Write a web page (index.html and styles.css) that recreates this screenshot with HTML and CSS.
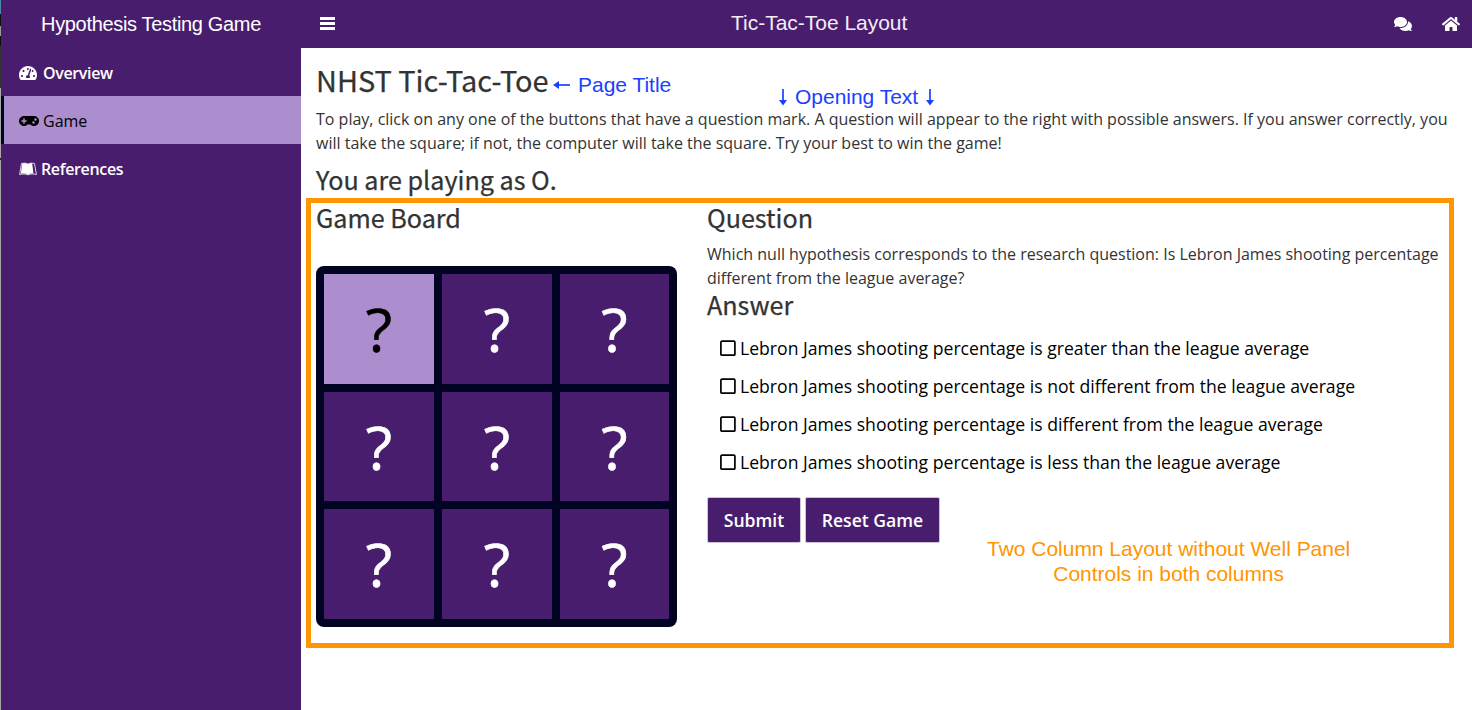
FILE: index.html
```html
<!DOCTYPE html>
<html lang="en">
<head>
<meta charset="utf-8">
<title>Hypothesis Testing Game</title>
<link rel="stylesheet" href="styles.css">
</head>
<body>
<div class="app">
  <div class="edge"></div>
  <aside class="sidebar">
    <div class="brand">Hypothesis Testing Game</div>
    <nav class="menu">
      <a class="item"><svg class="ico" width="18" height="16" viewBox="0 0 576 512"><path d="M288 32C128.94 32 0 160.94 0 320c0 52.8 14.25 102.26 39.06 144.8 5.61 9.62 16.3 15.2 27.44 15.2h443c11.14 0 21.83-5.58 27.44-15.2C561.75 422.26 576 372.8 576 320c0-159.06-128.94-288-288-288zm0 64c14.71 0 26.58 10.13 30.32 23.65-1.11 2.26-2.64 4.23-3.45 6.67l-9.22 27.67c-5.13 3.49-10.97 6.01-17.64 6.01-17.67 0-32-14.33-32-32S270.33 96 288 96zM96 384c-17.67 0-32-14.33-32-32s14.33-32 32-32 32 14.33 32 32-14.33 32-32 32zm48-160c-17.67 0-32-14.33-32-32s14.33-32 32-32 32 14.33 32 32-14.33 32-32 32zm246.77-72.41l-61.33 184C343.13 347.33 352 364.54 352 384c0 11.72-3.38 22.55-8.88 32H232.88c-5.5-9.45-8.88-20.28-8.88-32 0-33.94 26.5-61.43 59.9-63.59l61.34-184.01c4.17-12.56 17.73-19.45 30.36-15.17 12.57 4.19 19.35 17.79 15.17 30.36zm14.66 57.2l15.52-46.55c3.47-1.29 7.13-2.23 11.05-2.23 17.67 0 32 14.33 32 32s-14.33 32-32 32c-11.38-.01-20.89-6.28-26.57-15.22zM480 384c-17.67 0-32-14.33-32-32s14.33-32 32-32 32 14.33 32 32-14.33 32-32 32z"/></svg><span>Overview</span></a>
      <a class="item active"><svg class="ico" width="20" height="16" viewBox="0 0 640 512"><path d="M480.07 96H160a160 160 0 1 0 114.24 272h91.5A160 160 0 1 0 480.07 96zM248 268a12 12 0 0 1-12 12h-52v52a12 12 0 0 1-12 12h-24a12 12 0 0 1-12-12v-52H84a12 12 0 0 1-12-12v-24a12 12 0 0 1 12-12h52v-52a12 12 0 0 1 12-12h24a12 12 0 0 1 12 12v52h52a12 12 0 0 1 12 12zm216 76a40 40 0 1 1 40-40 40 40 0 0 1-40 40zm64-96a40 40 0 1 1 40-40 40 40 0 0 1-40 40z"/></svg><span>Game</span></a>
      <a class="item refs"><svg class="ico" width="18" height="16" viewBox="0 0 18 16"><path d="M3.200 2.600C5.600 2 7.700 2.200 9 3.300c1.300-1.100 2.600-1.300 4.200-1l1.200 10.300c-2.100-.2-3.800 0-5.400.8-2-.9-4.400-1.100-7.200-.6z"/><path d="M2.500 2.500.6 13.500c3.100-.7 6-.8 8.400.4 2.400-1.200 5.300-1.100 8.400-.4L15.500 2.500C13 1.900 10.600 2 9 3.100 7.400 2 5 1.900 2.500 2.500z" fill="none" stroke="currentColor" stroke-width=".8"/></svg><span>References</span></a>
    </nav>
  </aside>
  <div class="main">
    <header class="topbar">
      <svg class="bars" width="15" height="14" viewBox="0 0 15 14"><path d="M0 0h15v3H0zM0 5h15v3H0zM0 10h15v3H0z"/></svg>
      <div class="top-icons">
        <svg width="18" height="16" viewBox="0 0 576 512"><path d="M416 192c0-88.400-93.100-160-208-160S0 103.600 0 192c0 34.300 14.100 65.900 38 92-13.400 30.200-35.500 54.200-35.800 54.500-2.200 2.300-2.800 5.700-1.500 8.700S4.800 352 8 352c36.600 0 66.900-12.300 88.700-25 32.200 15.700 70.300 25 111.300 25 114.900 0 208-71.600 208-160zm122 220c23.900-26 38-57.700 38-92 0-66.900-53.500-124.200-129.300-148.100.9 6.600 1.300 13.300 1.300 20.100 0 105.900-107.700 192-240 192-10.800 0-21.300-.8-31.700-1.900C207.800 439.600 281.800 480 368 480c41 0 79.100-9.200 111.300-25 21.800 12.700 52.100 25 88.700 25 3.200 0 6.100-1.900 7.300-4.800 1.300-2.900.7-6.300-1.500-8.700-.3-.3-22.400-24.200-35.800-54.500z"/></svg>
        <svg width="18" height="16" viewBox="0 0 576 512"><path d="M280.370 148.260L96 300.110V464a16 16 0 0 0 16 16l112.060-.29a16 16 0 0 0 15.920-16V368a16 16 0 0 1 16-16h64a16 16 0 0 1 16 16v95.640a16 16 0 0 0 16 16.050L464 480a16 16 0 0 0 16-16V300L295.670 148.260a12.190 12.190 0 0 0-15.300 0zM571.600 251.470L488 182.560V44.050a12 12 0 0 0-12-12h-56a12 12 0 0 0-12 12v72.610L318.470 43a48 48 0 0 0-61 0L4.340 251.470a12 12 0 0 0-1.600 16.900l25.500 31A12 12 0 0 0 45.150 301l235.220-193.740a12.190 12.190 0 0 1 15.300 0L530.900 301a12 12 0 0 0 16.900-1.600l25.500-31a12 12 0 0 0-1.700-16.930z"/></svg>
      </div>
    </header>
    <main class="content">
      <h1>NHST Tic-Tac-Toe</h1>
      <p class="intro">To play, click on any one of the buttons that have a question mark. A question will appear to the right with possible answers. If you answer correctly, you will take the square; if not, the computer will take the square. Try your best to win the game!</p>
      <h2 class="playing">You are playing as O.</h2>
      <div class="columns">
        <section class="left">
          <h2>Game Board</h2>
          <div class="board">
            <button class="cell selected">?</button><button class="cell">?</button><button class="cell">?</button>
            <button class="cell">?</button><button class="cell">?</button><button class="cell">?</button>
            <button class="cell">?</button><button class="cell">?</button><button class="cell">?</button>
          </div>
        </section>
        <section class="right">
          <h2>Question</h2>
          <p class="question">Which null hypothesis corresponds to the research question: Is Lebron James shooting percentage different from the league average?</p>
          <h2 class="answer">Answer</h2>
          <div class="options">
            <label class="option"><svg class="box" width="16" height="16" viewBox="0 0 16 16"><rect x=".9" y="1.200" width="14" height="14" rx="1"/></svg><span>Lebron James shooting percentage is greater than the league average</span></label>
            <label class="option"><svg class="box" width="16" height="16" viewBox="0 0 16 16"><rect x=".9" y="1.200" width="14" height="14" rx="1"/></svg><span>Lebron James shooting percentage is not different from the league average</span></label>
            <label class="option"><svg class="box" width="16" height="16" viewBox="0 0 16 16"><rect x=".9" y="1.200" width="14" height="14" rx="1"/></svg><span>Lebron James shooting percentage is different from the league average</span></label>
            <label class="option"><svg class="box" width="16" height="16" viewBox="0 0 16 16"><rect x=".9" y="1.200" width="14" height="14" rx="1"/></svg><span>Lebron James shooting percentage is less than the league average</span></label>
          </div>
          <div class="actions"><button class="btn submit">Submit</button><button class="btn reset">Reset Game</button></div>
        </section>
      </div>
    </main>
  </div>
  <div class="note note-layout">Tic-Tac-Toe Layout</div>
  <div class="note note-title"><svg width="18" height="12" viewBox="0 0 18 12"><path d="M2 6h15" stroke="currentColor" stroke-width="1.700"/><path d="M0 6l6-4v8z"/></svg><span>Page Title</span></div>
  <div class="note note-opening"><svg width="10" height="18" viewBox="0 0 10 18"><path d="M5 1v14" stroke="currentColor" stroke-width="1.700"/><path d="M5 17.500L1 12h8z"/></svg><span>Opening Text</span><svg width="10" height="18" viewBox="0 0 10 18"><path d="M5 1v14" stroke="currentColor" stroke-width="1.700"/><path d="M5 17.500L1 12h8z"/></svg></div>
  <div class="note-frame"></div>
  <div class="note note-columns">Two Column Layout without Well Panel<br>Controls in both columns</div>
</div>
</body>
</html>
```
FILE: styles.css
```css
* { box-sizing: border-box; }
body { margin: 0; background: #fff; color: #333; font: 16px/24px "Open Sans", sans-serif; }
h1, h2, p { margin: 0; }
svg { fill: currentColor; display: block; flex: none; }
button { font-family: inherit; padding: 0; border: 0; margin: 0; }
.app { position: relative; display: flex; width: 1472px; height: 710px; overflow: hidden; }
.edge { width: 1px; flex: none; background: linear-gradient(#4a8ca8 0 14px, #111 14px 26px, #999 26px 36px, #111 36px 46px, #333 46px 88px, #aaa 88px 158px, #4d1038 158px 160px, #a5a5a5 160px); }
.sidebar { width: 300px; flex: none; background: #491d6e; color: #fff; }
.brand { height: 48px; display: flex; align-items: center; justify-content: center; font: 20px/48px "Liberation Sans", sans-serif; letter-spacing: -0.33px; white-space: nowrap; }
.item { display: flex; align-items: center; gap: 6px; height: 48px; padding: 1px 0 0 15px; border-left: 3px solid transparent; font-weight: 600; letter-spacing: -0.35px; }
.item.active { background: #ac8dce; color: #000; border-left-color: #000321; font-weight: 400; letter-spacing: 0; gap: 4px; }
.item.refs { gap: 4px; }
.main { flex: 1; min-width: 0; }
.topbar { height: 48px; background: #491d6e; color: #fff; display: flex; align-items: center; justify-content: space-between; padding: 0 12px 0 19px; }
.top-icons { display: flex; gap: 30px; }
.content { padding: 15px 15px 0; }
h1, h2 { font-family: "Noto Sans CJK SC", sans-serif; font-weight: 400; -webkit-text-stroke: 0.25px currentColor; }
h1 { font-size: 28.900px; line-height: 33px; }
h2 { font-size: 25.150px; line-height: 28px; }
.intro { margin-top: 11px; }
.playing { margin-top: 10px; }
.columns { display: flex; margin-top: 10px; }
.left { width: 391px; flex: none; }
.board { width: 361px; height: 361px; margin-top: 35px; padding: 8px; background: #000321; border-radius: 8px; display: grid; grid-template-columns: 110px 110px 109px; grid-template-rows: 110px 109px 110px; gap: 8px; }
.cell { background: #491d6e; color: #fff; font-size: 61px; line-height: 1; padding-bottom: 1px; -webkit-text-stroke: 0.6px currentColor; }
.cell.selected { background: #ac8dce; color: #000; }
.right { flex: 1; min-width: 0; }
.question { margin-top: 11px; }
.answer { margin-top: 0; }
.options { margin-top: 11px; padding-left: 13px; }
.option { display: flex; align-items: center; gap: 4px; height: 38px; color: #000; font-size: 17.610px; white-space: nowrap; }
.box { fill: none; stroke: #000; stroke-width: 1.700; }
.actions { display: flex; gap: 4px; margin-top: 16px; }
.btn { height: 46px; background: #491d6e; color: #fff; border: 1px solid #cdc3d6; border-radius: 2px; font-size: 17.600px; font-weight: 600; }
.submit { width: 94px; }
.reset { width: 135px; }
.note { position: absolute; font: 20.970px/25px "Liberation Sans", sans-serif; white-space: nowrap; }
.note-layout { left: 731px; top: 10px; color: #f2edf6; }
.note-title { left: 553px; top: 72px; display: flex; align-items: center; gap: 7px; color: #1a40ff; }
.note-opening { left: 778px; top: 84px; display: flex; align-items: center; gap: 7px; color: #1a40ff; }
.note-columns { left: 987px; top: 536px; color: #ff9500; text-align: center; }
.note-frame { position: absolute; left: 306px; top: 198px; width: 1148px; height: 450px; border: 5px solid #ff9500; }
```
